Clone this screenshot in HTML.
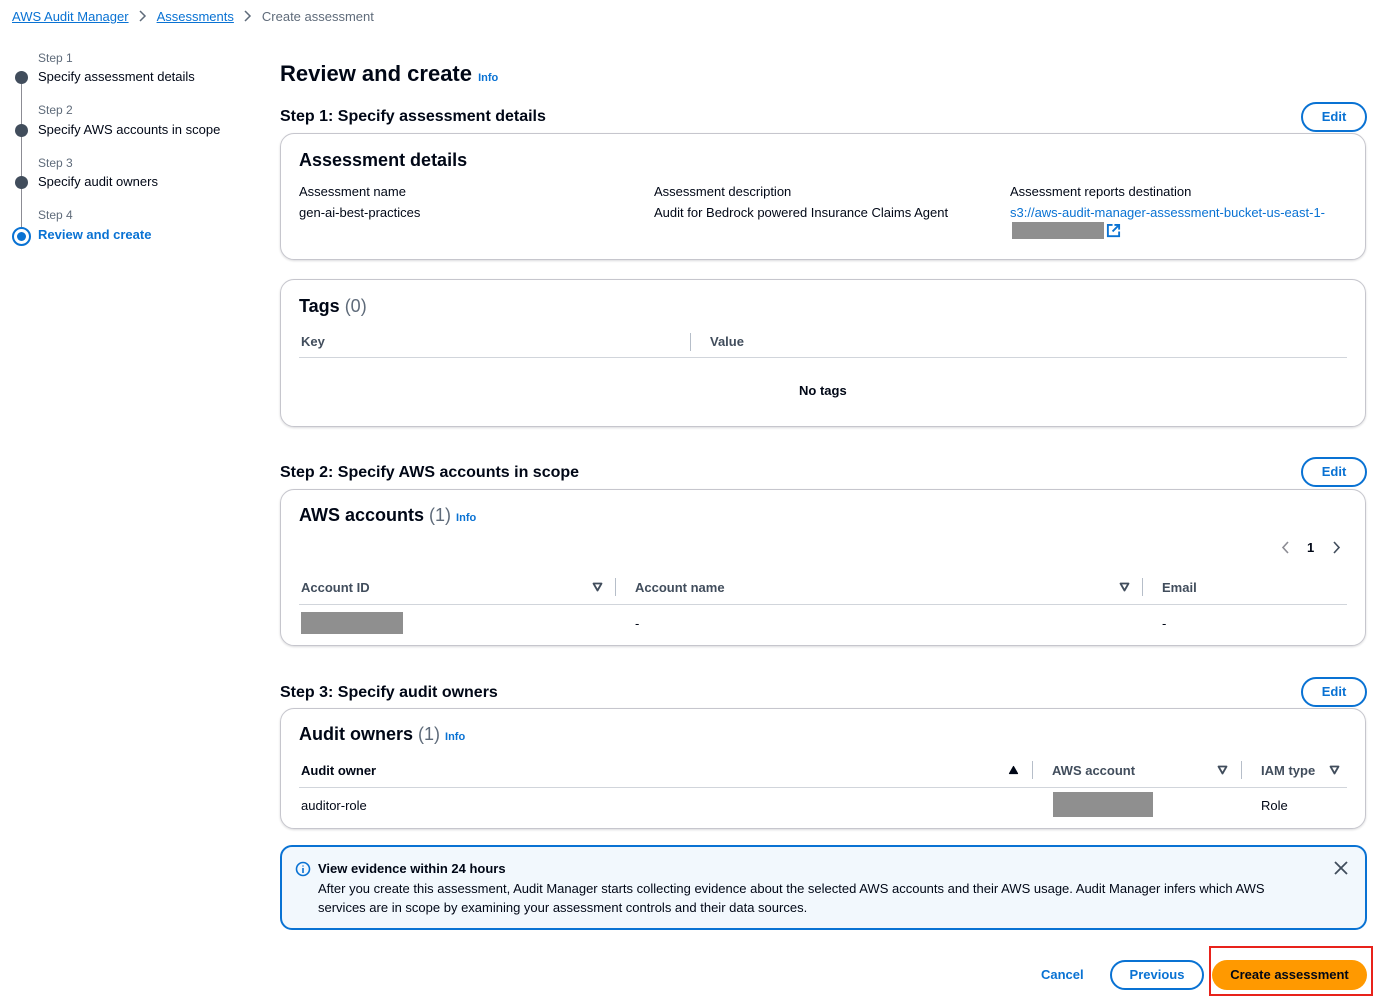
<!DOCTYPE html><html><head><style>
*{box-sizing:border-box;margin:0;padding:0}
body{width:1384px;height:1002px;background:#fff;font-family:"Liberation Sans",sans-serif;color:#000716;font-size:13px;position:relative;overflow:hidden}
.a{position:absolute;white-space:nowrap}
.lk{color:#0972d3}
.u{text-decoration:underline}
.g{color:#5f6b7a}
.b{font-weight:bold}
.panel{position:absolute;left:280px;width:1086px;border:1px solid #c6c6cd;border-radius:14px;box-shadow:0 1px 2px rgba(0,7,22,.15)}
.edit{position:absolute;left:1301px;width:66px;height:30px;border:2px solid #0972d3;border-radius:16px;color:#0972d3;font-weight:bold;font-size:13px;text-align:center;line-height:26px}
.h2{font-size:16px;font-weight:bold}
.h3{font-size:18px;font-weight:bold}
.info{color:#0972d3;font-size:11px;font-weight:bold}
.line{position:absolute;height:1px;background:#d1d5db}
.sep{position:absolute;width:1px;height:18px;background:#b6bec9}
.gray{position:absolute;background:#8f8f8f}
.dot{position:absolute;left:15px;width:13px;height:13px;border-radius:50%;background:#414d5c}
.th{font-weight:bold;color:#414d5c}
.fi{position:absolute}
</style></head><body>
<div class="a" style="left:12px;top:9px"><span class="lk u">AWS Audit Manager</span><svg style="margin:0 10px;vertical-align:-1px" width="8" height="12" viewBox="0 0 8 12"><path d="M1 1l5 5-5 5" fill="none" stroke="#5f6b7a" stroke-width="1.5"/></svg><span class="lk u">Assessments</span><svg style="margin:0 10px;vertical-align:-1px" width="8" height="12" viewBox="0 0 8 12"><path d="M1 1l5 5-5 5" fill="none" stroke="#5f6b7a" stroke-width="1.5"/></svg><span class="g">Create assessment</span></div>

<div style="position:absolute;left:21px;top:84px;width:1px;height:146px;background:#8c8c94"></div>
<div class="a g" style="left:38px;top:51px;font-size:12px">Step 1</div>
<div class="a" style="left:38px;top:69px">Specify assessment details</div>
<div class="dot" style="top:71px"></div>
<div class="a g" style="left:38px;top:103px;font-size:12px">Step 2</div>
<div class="a" style="left:38px;top:122px">Specify AWS accounts in scope</div>
<div class="dot" style="top:124px"></div>
<div class="a g" style="left:38px;top:156px;font-size:12px">Step 3</div>
<div class="a" style="left:38px;top:174px">Specify audit owners</div>
<div class="dot" style="top:176px"></div>
<div class="a g" style="left:38px;top:208px;font-size:12px">Step 4</div>
<div class="a lk b" style="left:38px;top:227px">Review and create</div>
<div style="position:absolute;left:12px;top:227px;width:19px;height:19px;border-radius:50%;border:2px solid #0972d3;background:#fff"></div>
<div style="position:absolute;left:17px;top:232px;width:9px;height:9px;border-radius:50%;background:#0972d3"></div>

<div class="a" style="left:280px;top:61px;font-size:22px;font-weight:bold">Review and create <span class="info">Info</span></div>

<div class="a h2" style="left:280px;top:108px">Step 1: Specify assessment details</div>
<div class="edit" style="top:102px">Edit</div>
<div class="panel" style="top:133px;height:127px"></div>
<div class="a h3" style="left:299px;top:150px">Assessment details</div>
<div class="a" style="left:299px;top:184px">Assessment name</div>
<div class="a" style="left:299px;top:205px">gen-ai-best-practices</div>
<div class="a" style="left:654px;top:184px">Assessment description</div>
<div class="a" style="left:654px;top:205px">Audit for Bedrock powered Insurance Claims Agent</div>
<div class="a" style="left:1010px;top:184px">Assessment reports destination</div>
<div class="a lk" style="left:1010px;top:205px">s3://aws-audit-manager-assessment-bucket-us-east-1-</div>
<div class="gray" style="left:1012px;top:222px;width:92px;height:17px"></div>
<svg class="a" style="left:1106px;top:223px" width="15" height="15" viewBox="0 0 16 16" fill="none" stroke="#0972d3" stroke-width="2"><path d="M7 2H2v12h12V9M9 2h5v5M14 2L7 9"/></svg>

<div class="panel" style="top:279px;height:148px"></div>
<div class="a h3" style="left:299px;top:296px">Tags <span style="font-weight:normal;color:#5f6b7a">(0)</span></div>
<div class="a th" style="left:301px;top:334px">Key</div>
<div class="sep" style="left:690px;top:333px"></div>
<div class="a th" style="left:710px;top:334px">Value</div>
<div class="line" style="left:299px;top:357px;width:1048px"></div>
<div class="a b" style="left:799px;top:383px">No tags</div>

<div class="a h2" style="left:280px;top:464px">Step 2: Specify AWS accounts in scope</div>
<div class="edit" style="top:457px">Edit</div>
<div class="panel" style="top:489px;height:157px"></div>
<div class="a h3" style="left:299px;top:505px">AWS accounts <span style="font-weight:normal;color:#5f6b7a">(1)</span> <span class="info">Info</span></div>
<svg class="fi" style="left:1281px;top:541px" width="8" height="13" viewBox="0 0 8 13"><path d="M7 1L2 6.5 7 12" fill="none" stroke="#8c8c94" stroke-width="1.6"/></svg>
<div class="a b" style="left:1307px;top:540px">1</div>
<svg class="fi" style="left:1333px;top:541px" width="8" height="13" viewBox="0 0 8 13"><path d="M1 1l5 5.5L1 12" fill="none" stroke="#414d5c" stroke-width="1.6"/></svg>
<div class="a th" style="left:301px;top:580px">Account ID</div>
<svg class="fi" style="left:592px;top:582px" width="11" height="10" viewBox="0 0 11 10"><path d="M1.5 1.5h8L5.5 8.5z" fill="none" stroke="#414d5c" stroke-width="1.8" stroke-linejoin="round"/></svg>
<div class="sep" style="left:615px;top:578px"></div>
<div class="a th" style="left:635px;top:580px">Account name</div>
<svg class="fi" style="left:1119px;top:582px" width="11" height="10" viewBox="0 0 11 10"><path d="M1.5 1.5h8L5.5 8.5z" fill="none" stroke="#414d5c" stroke-width="1.8" stroke-linejoin="round"/></svg>
<div class="sep" style="left:1142px;top:578px"></div>
<div class="a th" style="left:1162px;top:580px">Email</div>
<div class="line" style="left:299px;top:604px;width:1048px"></div>
<div class="gray" style="left:301px;top:612px;width:102px;height:22px"></div>
<div class="a" style="left:635px;top:616px">-</div>
<div class="a" style="left:1162px;top:616px">-</div>

<div class="a h2" style="left:280px;top:684px">Step 3: Specify audit owners</div>
<div class="edit" style="top:677px">Edit</div>
<div class="panel" style="top:708px;height:121px"></div>
<div class="a h3" style="left:299px;top:724px">Audit owners <span style="font-weight:normal;color:#5f6b7a">(1)</span> <span class="info">Info</span></div>
<div class="a th" style="left:301px;top:763px;color:#000716">Audit owner</div>
<svg class="fi" style="left:1008px;top:765px" width="11" height="10" viewBox="0 0 11 10"><path d="M1.5 8.5h8L5.5 1.5z" fill="#000716" stroke="#000716" stroke-width="1.2" stroke-linejoin="round"/></svg>
<div class="sep" style="left:1032px;top:761px"></div>
<div class="a th" style="left:1052px;top:763px">AWS account</div>
<svg class="fi" style="left:1217px;top:765px" width="11" height="10" viewBox="0 0 11 10"><path d="M1.5 1.5h8L5.5 8.5z" fill="none" stroke="#414d5c" stroke-width="1.8" stroke-linejoin="round"/></svg>
<div class="sep" style="left:1241px;top:761px"></div>
<div class="a th" style="left:1261px;top:763px">IAM type</div>
<svg class="fi" style="left:1329px;top:765px" width="11" height="10" viewBox="0 0 11 10"><path d="M1.5 1.5h8L5.5 8.5z" fill="none" stroke="#414d5c" stroke-width="1.8" stroke-linejoin="round"/></svg>
<div class="line" style="left:299px;top:787px;width:1048px"></div>
<div class="a" style="left:301px;top:798px">auditor-role</div>
<div class="gray" style="left:1053px;top:792px;width:100px;height:25px"></div>
<div class="a" style="left:1261px;top:798px">Role</div>

<div style="position:absolute;left:280px;top:845px;width:1087px;height:85px;border:2px solid #0972d3;border-radius:12px;background:#f2f8fd"></div>
<svg class="a" style="left:295px;top:861px" width="16" height="16" viewBox="0 0 16 16"><circle cx="8" cy="8" r="6.5" fill="none" stroke="#0972d3" stroke-width="1.6"/><path d="M8 7v5M8 4.5v1" stroke="#0972d3" stroke-width="1.6"/></svg>
<div class="a b" style="left:318px;top:861px">View evidence within 24 hours</div>
<div class="a" style="left:318px;top:879px;line-height:19px">After you create this assessment, Audit Manager starts collecting evidence about the selected AWS accounts and their AWS usage. Audit Manager infers which AWS<br>services are in scope by examining your assessment controls and their data sources.</div>
<svg class="a" style="left:1334px;top:861px" width="14" height="14" viewBox="0 0 14 14"><path d="M1 1L13 13M13 1L1 13" stroke="#414d5c" stroke-width="1.8"/></svg>

<div class="a lk b" style="left:1041px;top:967px">Cancel</div>
<div style="position:absolute;left:1110px;top:960px;width:94px;height:30px;border:2px solid #0972d3;border-radius:16px;color:#0972d3;font-weight:bold;text-align:center;line-height:26px">Previous</div>
<div style="position:absolute;left:1209px;top:946px;width:164px;height:50px;border:2px solid #e8221b"></div>
<div style="position:absolute;left:1212px;top:960px;width:155px;height:30px;background:#ff9900;border-radius:16px;color:#000716;font-weight:bold;text-align:center;line-height:30px">Create assessment</div>
</body></html>
